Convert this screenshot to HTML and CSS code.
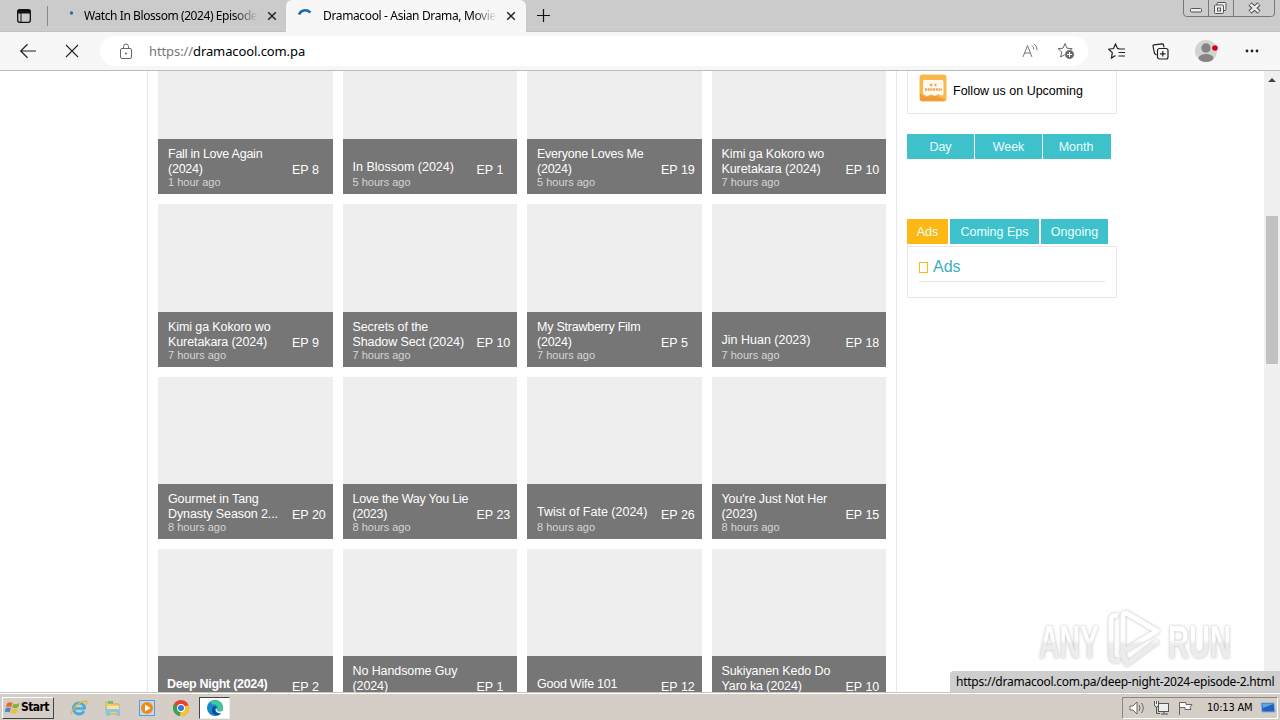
FILE: index.html
```html
<!DOCTYPE html>
<html lang="en">
<head>
  <meta charset="UTF-8">
  <title>Dramacool - Asian Drama, Movies</title>
  <link rel="stylesheet" href="styles.css">
</head>
<body>
  <div class="tabs">
    <svg class="tab-menu" width="16" height="16" viewBox="0 0 16 16"><rect x="1.7" y="1.7" width="12.6" height="12.6" rx="2" fill="none" stroke="#111" stroke-width="1.3"/><path d="M1.5 2h13v3.5h-13z" fill="#111"/><path d="M5 5v9" stroke="#111"/></svg>
    <span class="divider"></span>
    <div class="tab">
      <svg width="16" height="16"><circle cx="7.5" cy="5" r="1.7" fill="#2b6ca3"/></svg>
      <span class="tab-title first-title">Watch In Blossom (2024) Episode</span>
      <svg class="close" width="10" height="10"><path d="M1.2 1.2l7.6 7.6M8.8 1.2L1.2 8.8" stroke="#222" stroke-width="1.5"/></svg>
    </div>
    <div class="tab active">
      <svg width="16" height="16"><path d="M2 6.5C4 2 9 .8 13.5 4.5" fill="none" stroke="#1769aa" stroke-width="2.6"/></svg>
      <span class="tab-title second-title">Dramacool - Asian Drama, Movie</span>
      <svg class="close" width="10" height="10"><path d="M1.2 1.2l7.6 7.6M8.8 1.2L1.2 8.8" stroke="#222" stroke-width="1.5"/></svg>
    </div>
    <svg class="plus" width="15" height="15"><path d="M7.5 1v13M1 7.5h13" stroke="#111" stroke-width="1.2"/></svg>
    <svg class="window-buttons" width="94" height="18" viewBox="0 0 94 18"><path d="M1.5 0v13q0 3.5 3 3.5h85q3 0 3-3.5V0M26.5 0v16M51.5 0v16" fill="none" stroke="#777"/><g fill="#eee" stroke="#555"><rect x="8.5" y="8.5" width="11" height="3.5" rx="1"/><rect x="35" y="2.5" width="9" height="8" rx="1"/><rect x="32.5" y="5" width="9" height="8.5" rx="1"/><rect x="35.5" y="8" width="3" height="3"/></g><path d="M68 4l9 8M77 4l-9 8" stroke="#555" stroke-width="4.4"/><path d="M68.5 4.4l8 7.2M76.5 4.4l-8 7.2" stroke="#eee" stroke-width="2.4"/></svg>
  </div>

  <div class="toolbar">
    <svg class="back" width="18" height="16"><path d="M17 8H2M8.5 1.3L1.7 8l6.800 6.700" fill="none" stroke="#222" stroke-width="1.2"/></svg>
    <svg class="stop" width="14" height="14"><path d="M1 1l12 12M13 1L1 13" stroke="#222" stroke-width="1.1"/></svg>
    <div class="address">
      <svg class="lock" width="14" height="17"><rect x="1.5" y="5.5" width="11" height="10" rx="1.5" fill="none" stroke="#666"/><path d="M4.5 5.5V3.5a2.5 2.5 0 0 1 5 0v2" fill="none" stroke="#666"/><circle cx="7" cy="10.5" r="1" fill="#666"/></svg>
      <span class="url"><i>https://</i>dramacool.com.pa</span>
      <svg class="read" width="17" height="16" fill="none" stroke="#777"><path d="M1 14L5.5 2.5 10 14M2.7 10h5.8M10 2.500q2 1.500 1.800 4M12 .8q3.500 2.500 3 6.500"/></svg>
      <svg class="star" width="18" height="18"><path d="M8 1.500l2 4.700 5.200.5-4 3.300 1 5L8 12.400l-4.400 2.600 1.200-5L1 6.700l5-.5z" fill="none" stroke="#666"/><circle cx="12.5" cy="12.5" r="4.7" fill="#666" stroke="#fff" stroke-width=".5"/><path d="M12.5 10v5M10 12.5h5" stroke="#fff"/></svg>
    </div>
    <svg class="favorites" width="18" height="17" fill="none" stroke="#222" stroke-width="1.2"><path d="M11 5.700L9.500 5.500 7.500 1l-2 4.500-5 .7L4.300 9.500 3.500 15l4-2.500M10.500 6H17M10.500 9.500H17M10.500 13H17"/></svg>
    <svg class="collections" width="17" height="17" fill="none" stroke="#222" stroke-width="1.2"><path d="M4.500 12L2.500 10.500 1 3Q.8 2 2 1.800L10 .8q1.300 0 1.500 1l.5 2.500"/><rect x="5.5" y="5.5" width="10.5" height="10.5" rx="2"/><path d="M10.800 8v5.500M8 10.800h5.500"/></svg>
    <svg class="profile" width="24" height="24"><circle cx="11" cy="12" r="11" fill="#d3d3d0"/><circle cx="11" cy="9" r="4.7" fill="#858585"/><ellipse cx="11" cy="19" rx="7.5" ry="4" fill="#858585"/><circle cx="20" cy="9" r="2.8" fill="#d9001b"/></svg>
    <svg class="more" width="14" height="4" fill="#222"><circle cx="2" cy="2" r="1.4"/><circle cx="7" cy="2" r="1.4"/><circle cx="12" cy="2" r="1.4"/></svg>
  </div>

  <div class="page">
    <div class="drama-list">
      <div class="drama"><div class="caption"><div class="info"><h3 class="tight">Fall in Love Again<br>(2024)</h3><p>1 hour ago</p></div><span class="ep">EP 8</span></div></div>
      <div class="drama"><div class="caption"><div class="info"><h3 class="one">In Blossom (2024)</h3><p>5 hours ago</p></div><span class="ep">EP 1</span></div></div>
      <div class="drama"><div class="caption"><div class="info"><h3 class="tight">Everyone Loves Me<br>(2024)</h3><p>5 hours ago</p></div><span class="ep">EP 19</span></div></div>
      <div class="drama"><div class="caption"><div class="info"><h3>Kimi ga Kokoro wo<br>Kuretakara (2024)</h3><p>7 hours ago</p></div><span class="ep">EP 10</span></div></div>

      <div class="drama"><div class="caption"><div class="info"><h3>Kimi ga Kokoro wo<br>Kuretakara (2024)</h3><p>7 hours ago</p></div><span class="ep">EP 9</span></div></div>
      <div class="drama"><div class="caption"><div class="info"><h3>Secrets of the<br>Shadow Sect (2024)</h3><p>7 hours ago</p></div><span class="ep">EP 10</span></div></div>
      <div class="drama"><div class="caption"><div class="info"><h3 class="tight">My Strawberry Film<br>(2024)</h3><p>7 hours ago</p></div><span class="ep">EP 5</span></div></div>
      <div class="drama"><div class="caption"><div class="info"><h3 class="one">Jin Huan (2023)</h3><p>7 hours ago</p></div><span class="ep">EP 18</span></div></div>

      <div class="drama"><div class="caption"><div class="info"><h3>Gourmet in Tang<br>Dynasty Season 2...</h3><p>8 hours ago</p></div><span class="ep">EP 20</span></div></div>
      <div class="drama"><div class="caption"><div class="info"><h3 class="tight">Love the Way You Lie<br>(2023)</h3><p>8 hours ago</p></div><span class="ep">EP 23</span></div></div>
      <div class="drama"><div class="caption"><div class="info"><h3 class="one">Twist of Fate (2024)</h3><p>8 hours ago</p></div><span class="ep">EP 26</span></div></div>
      <div class="drama"><div class="caption"><div class="info"><h3>You're Just Not Her<br>(2023)</h3><p>8 hours ago</p></div><span class="ep">EP 15</span></div></div>

      <div class="drama"><div class="caption"><div class="info"><h3 class="one hovered">Deep Night (2024)</h3><p>&nbsp;</p></div><span class="ep">EP 2</span></div></div>
      <div class="drama"><div class="caption"><div class="info"><h3>No Handsome Guy<br>(2024)</h3><p>&nbsp;</p></div><span class="ep">EP 1</span></div></div>
      <div class="drama"><div class="caption"><div class="info"><h3 class="one tight">Good Wife 101</h3><p>&nbsp;</p></div><span class="ep">EP 12</span></div></div>
      <div class="drama"><div class="caption"><div class="info"><h3>Sukiyanen Kedo Do<br>Yaro ka (2024)</h3><p>&nbsp;</p></div><span class="ep">EP 10</span></div></div>
    </div>

    <div class="sidebar">
      <div class="follow">
        <svg width="28" height="28"><rect x=".5" y=".5" width="27" height="27" rx="3" fill="#f8b94a"/><path d="M1 19q5 6 10 3t16 5H3q-2 0-2-2z" fill="#f29a3c"/><path d="M5 6h18q1.500 0 1.500 2v12q0 1.500-2 1.500L19 20l-3 2-4-1.500L8 22l-3-1.500q-1 0-1-2V8q0-2 1-2z" fill="#fffaf0"/><path d="M11 11h3m1.500 0h2.500M6 15.500h17" stroke="#eba557" stroke-width="2.5" stroke-dasharray="2 .7"/></svg>
        <span>Follow us on Upcoming</span>
      </div>
      <div class="period"><span>Day</span><span>Week</span><span>Month</span></div>
      <div class="sections"><span class="selected">Ads</span><span>Coming Eps</span><span>Ongoing</span></div>
      <div class="ads-box"><h2><i></i>Ads</h2></div>
    </div>

    <div class="scrollbar">
      <svg width="8" height="5"><path d="M0 5l4-4 4 4z" fill="#444"/></svg>
      <div class="thumb"></div>
    </div>

    <svg class="watermark" width="204" height="70" viewBox="0 0 204 70">
      <defs>
        <linearGradient id="fade" gradientUnits="userSpaceOnUse" x1="0" y1="0" x2="0" y2="66">
          <stop offset=".5" stop-color="#fff"/>
          <stop offset=".56" stop-color="#ececec"/>
        </linearGradient>
      </defs>
      <text x="3" y="51" textLength="60" lengthAdjust="spacingAndGlyphs">ANY</text>
      <text x="132" y="51" textLength="63" lengthAdjust="spacingAndGlyphs">RUN</text>
      <path d="M82 9Q75 7 75 14V48Q75 56 84 53M87 46V10Q87 4 92 7L121 24 86 45 91 57 122 34" fill="none" stroke="url(#fade)" stroke-width="5" stroke-linejoin="round"/>
    </svg>
    <div class="status"><span>https://dramacool.com.pa/deep-night-2024-episode-2.html</span></div>
  </div>

  <div class="taskbar">
    <div class="start">
      <svg width="15" height="16"><path d="M2 3.500Q5 1.500 7.500 3L6.200 7.200Q3.500 5.800.8 7.500z" fill="#e96727"/><path d="M8.500 3.500q3 1.500 6-.5L13.300 7.200Q10 9 7.200 7.500z" fill="#79b43e"/><path d="M.6 8.500Q3.300 6.800 5.900 8.200L4.700 12.500Q2 11-.5 12.500z" fill="#438cc9"/><path d="M7 8.500q3 1.500 6 0L11.800 12.700q-3 1.500-6 0z" fill="#f4bd2f"/></svg>
      <span>Start</span>
    </div>
    <svg class="app" width="18" height="18"><circle cx="9" cy="9.5" r="5.5" fill="none" stroke="#43acdd" stroke-width="3"/><path d="M4 9.500h11" stroke="#43acdd" stroke-width="2.5"/><path d="M13.500 11.500h4" stroke="#d5cec7" stroke-width="2"/><path d="M2 15Q0 15 4 9T16 2q2 .5 0 4" fill="none" stroke="#e4b83c" stroke-width="1.3"/></svg>
    <svg class="app" width="18" height="18"><path d="M2 3h6l1 2h6v10H2z" fill="#edcf70" stroke="#d6ad4d"/><path d="M4 2h5v3H4z" fill="#76bd78"/><path d="M2 8h14v9h-3v-4H6v4H2z" fill="#8ec4dc"/><path d="M3 7h12v3H3z" fill="#f5e4a5"/></svg>
    <svg class="app" width="18" height="18"><rect x="1.5" y="1.5" width="15" height="15" fill="#c3daf0" stroke="#5e9cd0"/><circle cx="9" cy="9" r="6" fill="#f3891b"/><path d="M7 5.500l5.500 3.500L7 12.500z" fill="#fff"/></svg>
    <svg class="app" width="18" height="18"><circle cx="9" cy="9" r="8" fill="#e54235"/><path d="M9 9L2 5.200A8 8 0 0 0 9 17z" fill="#35a552"/><path d="M9 9l7.500-3A8 8 0 0 1 8 17z" fill="#f8c52b"/><circle cx="9" cy="9" r="4" fill="#fff"/><circle cx="9" cy="9" r="3" fill="#3774de"/></svg>
    <div class="running"><svg width="18" height="18"><circle cx="9" cy="9" r="8" fill="#1686ce"/><path d="M4 3A8 8 0 0 1 17 9q0 4-5 3-2-1-.5-3 0-4-5-3.500z" fill="#42c995"/><path d="M7 8q-3 5 2 8 4 1 6.500-2Q9 15 9 10l1.500-2Q9 6.500 7 8z" fill="#0c4da2"/><path d="M11.500 9q-2 2 .5 3.200 3 .8 5.500-1V13l-2 1.500Q10 14.500 9.500 10.500z" fill="#fff"/></svg></div>
    <div class="tray">
      <svg width="17" height="16" fill="#fff" stroke="#666"><path d="M1 6h3l4-4v12l-4-4H1z"/><path d="M10 5q2 3 0 6M12.500 3q3.500 5 0 10" fill="none"/></svg>
      <svg class="network" width="17" height="16" fill="#eee" stroke="#555"><rect x="5.5" y="3.5" width="10" height="8"/><path d="M8 14h7M11 12v2M3.500 7v6.500H7" fill="none"/><path d="M1.500 1v4q0 2 2 2t2-2V1M3.500 1v3"/></svg>
      <svg class="flag" width="17" height="16"><path d="M2.500 2v13M3 2.500h6v2h6l-2 3 1 2H8v-2H3" fill="#fff" stroke="#666"/></svg>
      <span>10:13 AM</span>
      <svg class="desktop" width="16" height="14"><path d="M1 2h13l1 9H2z" fill="#2461bd" stroke="#85aee1"/><path d="M2 3h11L3 7z" fill="#6ba0df"/></svg>
    </div>
  </div>
</body>
</html>
```

FILE: styles.css
```css
* {
  box-sizing: border-box;
}
body {
  margin: 0;
  width: 1280px;
  height: 720px;
  overflow: hidden;
  display: flex;
  flex-direction: column;
  background: #fff;
  font-family: "Liberation Sans", Arial, sans-serif;
  color: #000;
}
svg {
  display: block;
  flex: none;
}
h2, h3, p {
  margin: 0;
  font-weight: normal;
}
span, h3, p {
  white-space: nowrap;
}

/* Browser tabs and toolbar */
.tabs {
  height: 32px;
  flex: none;
  display: flex;
  align-items: center;
  background: #cbcbcb;
  border-bottom: 1px solid #c0c0c0;
  font: 12px "Noto Sans", sans-serif;
}
.tab-menu {
  margin-left: 16px;
}
.divider {
  width: 1px;
  height: 20px;
  margin-left: 15px;
  background: #888;
}
.tab {
  width: 238px;
  height: 32px;
  display: flex;
  align-items: center;
  padding-left: 16px;
}
.tab.active {
  width: 240px;
  margin-top: 1px;
  padding-left: 11px;
  background: #f7f7f7;
  border-radius: 6px 6px 0 0;
}
.tab-title {
  width: 174px;
  margin-left: 4px;
  overflow: hidden;
  -webkit-mask-image: linear-gradient(90deg, #000 86%, transparent);
}
.first-title {
  letter-spacing: -0.42px;
}
.second-title {
  margin: 0 0 1px 10px;
  letter-spacing: -0.36px;
}
.close {
  margin-left: 9px;
}
.plus {
  margin-left: 10px;
}
.window-buttons {
  align-self: flex-start;
  margin-left: auto;
  margin-right: 4px;
}
.toolbar {
  height: 39px;
  flex: none;
  display: flex;
  align-items: center;
  background: #f7f7f7;
  border-bottom: 1px solid #bdbdbd;
}
.back {
  margin-left: 19px;
}
.stop {
  margin-left: 28px;
}
.address {
  width: 988px;
  height: 30px;
  margin-left: 21px;
  padding-left: 19px;
  border-radius: 15px;
  background: #fff;
  display: flex;
  align-items: center;
}
.url {
  width: 873px;
  margin-left: 16px;
  font: 13px "Noto Sans", sans-serif;
  letter-spacing: -0.1px;
}
.url i {
  font-style: normal;
  color: #777;
}
.star {
  margin-left: 18px;
}
.favorites {
  margin-left: 20px;
}
.collections {
  margin-left: 26px;
}
.profile {
  margin-left: 26px;
}
.more {
  margin-left: 26px;
}

/* Page content */
.page {
  height: 621px;
  flex: none;
  display: flex;
  align-items: flex-start;
  position: relative;
  overflow: hidden;
}
.drama-list {
  width: 750px;
  flex: none;
  margin: -39px 0 0 147px;
  padding: 0 10px;
  border: solid #e8e8e8;
  border-width: 0 1px;
  display: grid;
  grid-template-columns: repeat(4, 174.5px);
  grid-template-rows: repeat(4, 162.3px);
  gap: 10px;
}
.drama {
  background: #eee;
  display: flex;
  align-items: flex-end;
}
.caption {
  width: 100%;
  height: 55px;
  padding: 0 0 6px 10px;
  display: flex;
  align-items: flex-end;
  background: #767676;
  color: #fff;
}
.info {
  width: 124px;
}
.info h3 {
  margin-bottom: 1px;
  font-size: 12.5px;
  line-height: 15px;
  letter-spacing: -0.1px;
}
.info p {
  margin-top: -2px;
  font-size: 11px;
  line-height: 12px;
  color: #d5d5d5;
}
.info .one {
  margin-bottom: 3px;
  letter-spacing: 0;
}
.info .tight {
  letter-spacing: -0.24px;
}
.info .hovered {
  margin-left: -1px;
  font-weight: bold;
  letter-spacing: -0.3px;
}
.ep {
  font-size: 12.5px;
  line-height: 15px;
  margin-bottom: 10px;
}
.sidebar {
  width: 210px;
  flex: none;
  margin-left: 10px;
}
.follow {
  height: 43px;
  padding: 3px 0 0 11px;
  border: 1px solid #e7e7e7;
  border-top: none;
  display: flex;
  font-size: 12.5px;
  line-height: 34px;
}
.follow span {
  margin-left: 6px;
}
.period {
  display: flex;
  gap: 1px;
  margin-top: 20px;
}
.period span,
.sections span {
  height: 25px;
  line-height: 26px;
  text-align: center;
  background: #3fc1cc;
  color: #e9ffff;
  font-size: 12.5px;
}
.period span {
  width: 67px;
}
.period span:last-child {
  width: 68px;
  padding-right: 2px;
}
.sections {
  display: flex;
  gap: 2px;
  margin-top: 60px;
}
.sections span {
  width: 67px;
}
.sections span:nth-child(2) {
  width: 89px;
}
.sections .selected {
  width: 41px;
  background: #fdb813;
}
.ads-box {
  height: 52px;
  margin-top: 2px;
  padding: 6px 11px;
  border: 1px solid #e7e7e7;
}
.ads-box h2 {
  height: 29px;
  display: flex;
  align-items: center;
  border-bottom: 1px solid #e7e7e7;
  font-size: 16px;
  color: #3bafbb;
}
.ads-box i {
  width: 9px;
  height: 11px;
  margin-right: 5px;
  border: 1px solid #fdb813;
}
.scrollbar {
  width: 16px;
  height: 621px;
  margin-left: auto;
  background: #f0f0f0;
  display: flex;
  flex-direction: column;
  align-items: center;
  padding-top: 6px;
}
.thumb {
  width: 12px;
  height: 148px;
  margin-top: 134px;
  background: #c1c1c1;
}
.watermark {
  position: absolute;
  left: 1036px;
  top: 536px;
  filter: drop-shadow(0 0 1.5px #bbb);
}
.watermark text {
  fill: url(#fade);
  font: bold 47px "Liberation Sans", sans-serif;
}
.status {
  position: absolute;
  right: 0;
  bottom: 0;
  width: 330px;
  height: 21px;
  padding-left: 6px;
  border-radius: 4px 0 0 0;
  background: #cecece;
  font: 12px/21px "Noto Sans", sans-serif;
  letter-spacing: -0.25px;
}

/* Windows taskbar */
.taskbar {
  height: 28px;
  flex: none;
  display: flex;
  align-items: center;
  padding: 2px 2px 0;
  background: #d5cec7;
  border-top: 1px solid #c9c5c0;
  box-shadow: inset 0 1px #fff;
}
.start {
  width: 52px;
  height: 22px;
  padding-left: 2px;
  display: flex;
  align-items: center;
  border: 1px solid #fff;
  border-color: #fff #444 #444 #fff;
  font: bold 12px "DejaVu Sans Condensed", sans-serif;
}
.start span {
  margin: 0 0 2px 1px;
  letter-spacing: -0.6px;
}
.app {
  margin-left: 16px;
}
.running {
  width: 31px;
  height: 22px;
  margin-left: 9px;
  padding: 1px 6px;
  background: #fff;
  border: 1px solid #444;
  border-right-color: #eee;
  border-bottom-color: #eee;
}
.tray {
  width: 156px;
  height: 22px;
  margin-left: auto;
  padding-left: 6px;
  border: 1px solid #888;
  border-right-color: #fff;
  border-bottom-color: #fff;
  display: flex;
  align-items: center;
  font: 11px "DejaVu Sans Condensed", sans-serif;
}
.network,
.flag {
  margin-left: 7px;
}
.tray span {
  width: 47px;
  margin-left: 13px;
  letter-spacing: -0.2px;
}
.desktop {
  margin-left: 6px;
}
```
